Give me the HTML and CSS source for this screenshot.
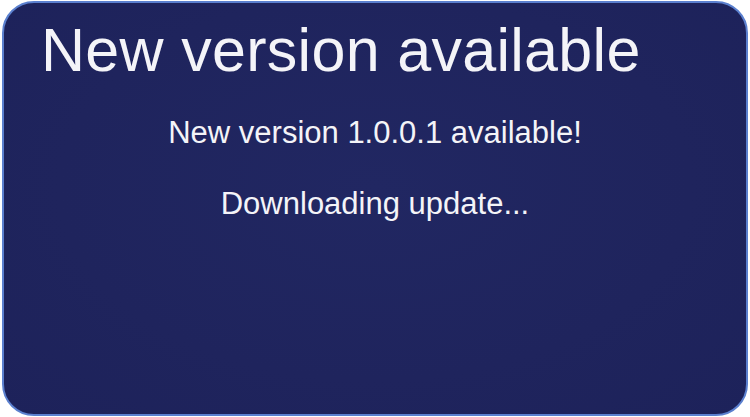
FILE: index.html
```html
<!DOCTYPE html>
<html>
<head>
<meta charset="utf-8">
<link rel="stylesheet" href="styles.css">
</head>
<body>
<div class="card">
  <h1 class="title">New version available</h1>
  <p class="msg version">New version 1.0.0.1 available!</p>
  <p class="msg status">Downloading update...</p>
</div>
</body>
</html>
```
FILE: styles.css
```css
html, body {
  margin: 0;
  padding: 0;
  background: #ffffff;
}
body {
  width: 750px;
  height: 417px;
  overflow: hidden;
  font-family: "Liberation Sans", Arial, sans-serif;
}
.card {
  box-sizing: border-box;
  margin: 1px 2px 0 2px;
  width: 746px;
  height: 415px;
  border: 2px solid #5b80cf;
  border-radius: 32px;
  background: radial-gradient(ellipse at 50% 45%, #212762 0%, #1f245d 60%, #1d225a 100%);
  padding: 17px 0 0 0;
  display: flex;
  flex-direction: column;
  color: #f4f4f8;
}
.title {
  margin: 0 0 0 37px;
  font-size: 61px;
  line-height: 61px;
  font-weight: normal;
  letter-spacing: 0.3px;
}
.msg {
  margin: 0;
  font-size: 31px;
  line-height: 31px;
  text-align: center;
}
.version {
  margin-top: 36px;
}
.status {
  margin-top: 40px;
}
```
